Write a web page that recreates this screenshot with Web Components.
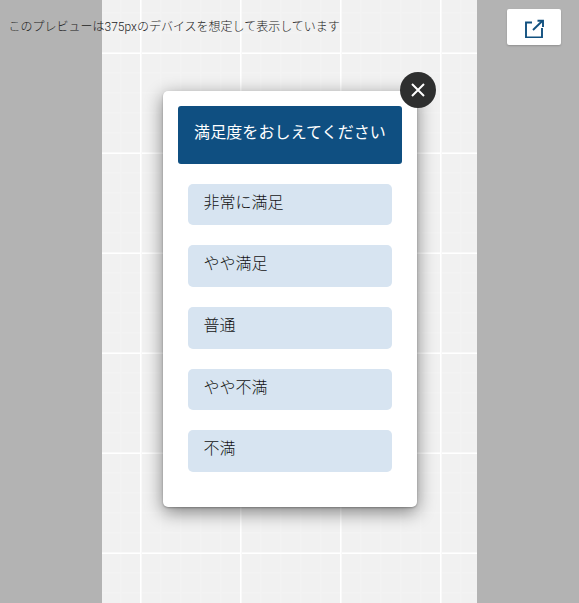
<!DOCTYPE html>
<html lang="ja">
<head>
<meta charset="utf-8">
<title>プレビュー</title>
<style>
html,body{margin:0;height:100%;overflow:hidden;background:#b3b3b3;font-family:Roboto,"Noto Sans CJK JP",sans-serif;font-weight:300;}
</style>
</head>
<body>
<preview-stage>
  <span slot="note">このプレビューは375pxのデバイスを想定して表示しています</span>
  <survey-modal title-text="満足度をおしえてください">
    <survey-option>非常に満足</survey-option>
    <survey-option>やや満足</survey-option>
    <survey-option>普通</survey-option>
    <survey-option>やや不満</survey-option>
    <survey-option>不満</survey-option>
  </survey-modal>
</preview-stage>
<script>
class PreviewStage extends HTMLElement{
  constructor(){super();this.attachShadow({mode:'open'}).innerHTML=`
  <style>
  :host{display:grid;width:579px;height:603px;position:relative;overflow:hidden;background:#b3b3b3;}
  .preview{grid-area:1/1;margin-left:102px;width:375px;height:603px;background-color:#f1f1f1;
    background-image:
      linear-gradient(90deg,#fff 0,#fff 1px,#f9f9f9 1px,#f9f9f9 2px,transparent 2px),
      linear-gradient(#f9f9f9 0,#f9f9f9 1px,#fff 1px,#fff 2px,transparent 2px),
      linear-gradient(90deg,#f3f3f3 0,#f3f3f3 1px,#f2f2f2 1px,#f2f2f2 2px,transparent 2px),
      linear-gradient(#f3f3f3 0,#f3f3f3 1px,#f2f2f2 1px,#f2f2f2 2px,transparent 2px);
    background-size:100px 100px,100px 100px,20px 20px,20px 20px;
    background-position:38px 0,0 52px,18px 0,0 12px;}
  .note{position:absolute;left:8.5px;top:20px;font-size:12px;line-height:15px;color:#222;white-space:nowrap;}
  .open{position:absolute;left:507px;top:9px;width:54px;height:36px;background:#fff;border-radius:2px;
    box-shadow:0 1px 2px rgba(0,0,0,.2);}
  .open svg{display:block;margin:7px 0 0 16px;}
  .center{grid-area:1/1;margin-left:163px;margin-top:91px;align-self:start;justify-self:start;}
  </style>
  <div class="preview"></div>
  <div class="center"><slot></slot></div>
  <div class="note"><slot name="note"></slot></div>
  <div class="open">
    <svg width="22" height="22" viewBox="0 0 22 22" fill="none" stroke="#11507f" stroke-width="1.900">
      <path d="M9 6.500H3V21.500H19V12"/>
      <path d="M10 14L19.500 4.800"/>
      <path d="M14.500 4.800H20V11"/>
    </svg>
  </div>`;}
}
class SurveyModal extends HTMLElement{
  constructor(){super();this.attachShadow({mode:'open'}).innerHTML=`
  <style>
  :host{display:block;position:relative;box-sizing:border-box;width:254px;height:416px;background:#fff;border-radius:5px;
    padding:15px;box-shadow:0 5px 18px rgba(0,0,0,.48),0 1px 2px rgba(0,0,0,.25);}
  .head{box-sizing:border-box;height:58px;padding-bottom:8px;background:#0f4f81;color:#fff;border-radius:3px;font-size:16px;font-weight:400;letter-spacing:.1px;display:flex;align-items:center;justify-content:center;white-space:nowrap;}
  .list{display:flex;flex-direction:column;gap:20px;padding:19.75px 10px 0;}
  .close{position:absolute;right:-19px;top:-19px;width:36px;height:36px;border-radius:50%;background:#2e2f2f;display:flex;align-items:center;justify-content:center;}
  </style>
  <div class="head"><span id="t"></span></div>
  <div class="list"><slot></slot></div>
  <div class="close"><svg width="16" height="16" viewBox="0 0 16 16" stroke="#fff" stroke-width="2" fill="none"><path d="M2 2L14 14M14 2L2 14"/></svg></div>`;
  }
  connectedCallback(){this.shadowRoot.getElementById('t').textContent=this.getAttribute('title-text');}
}
class SurveyOption extends HTMLElement{
  constructor(){super();this.attachShadow({mode:'open'}).innerHTML=`
  <style>
  :host{display:block;box-sizing:border-box;height:41.6px;background:#d7e4f1;border-radius:5px;padding:8px 15.5px;font-size:16px;line-height:22px;color:#141414;}
  </style><slot></slot>`;}
}
customElements.define('preview-stage',PreviewStage);
customElements.define('survey-modal',SurveyModal);
customElements.define('survey-option',SurveyOption);
</script>
</body>
</html>
